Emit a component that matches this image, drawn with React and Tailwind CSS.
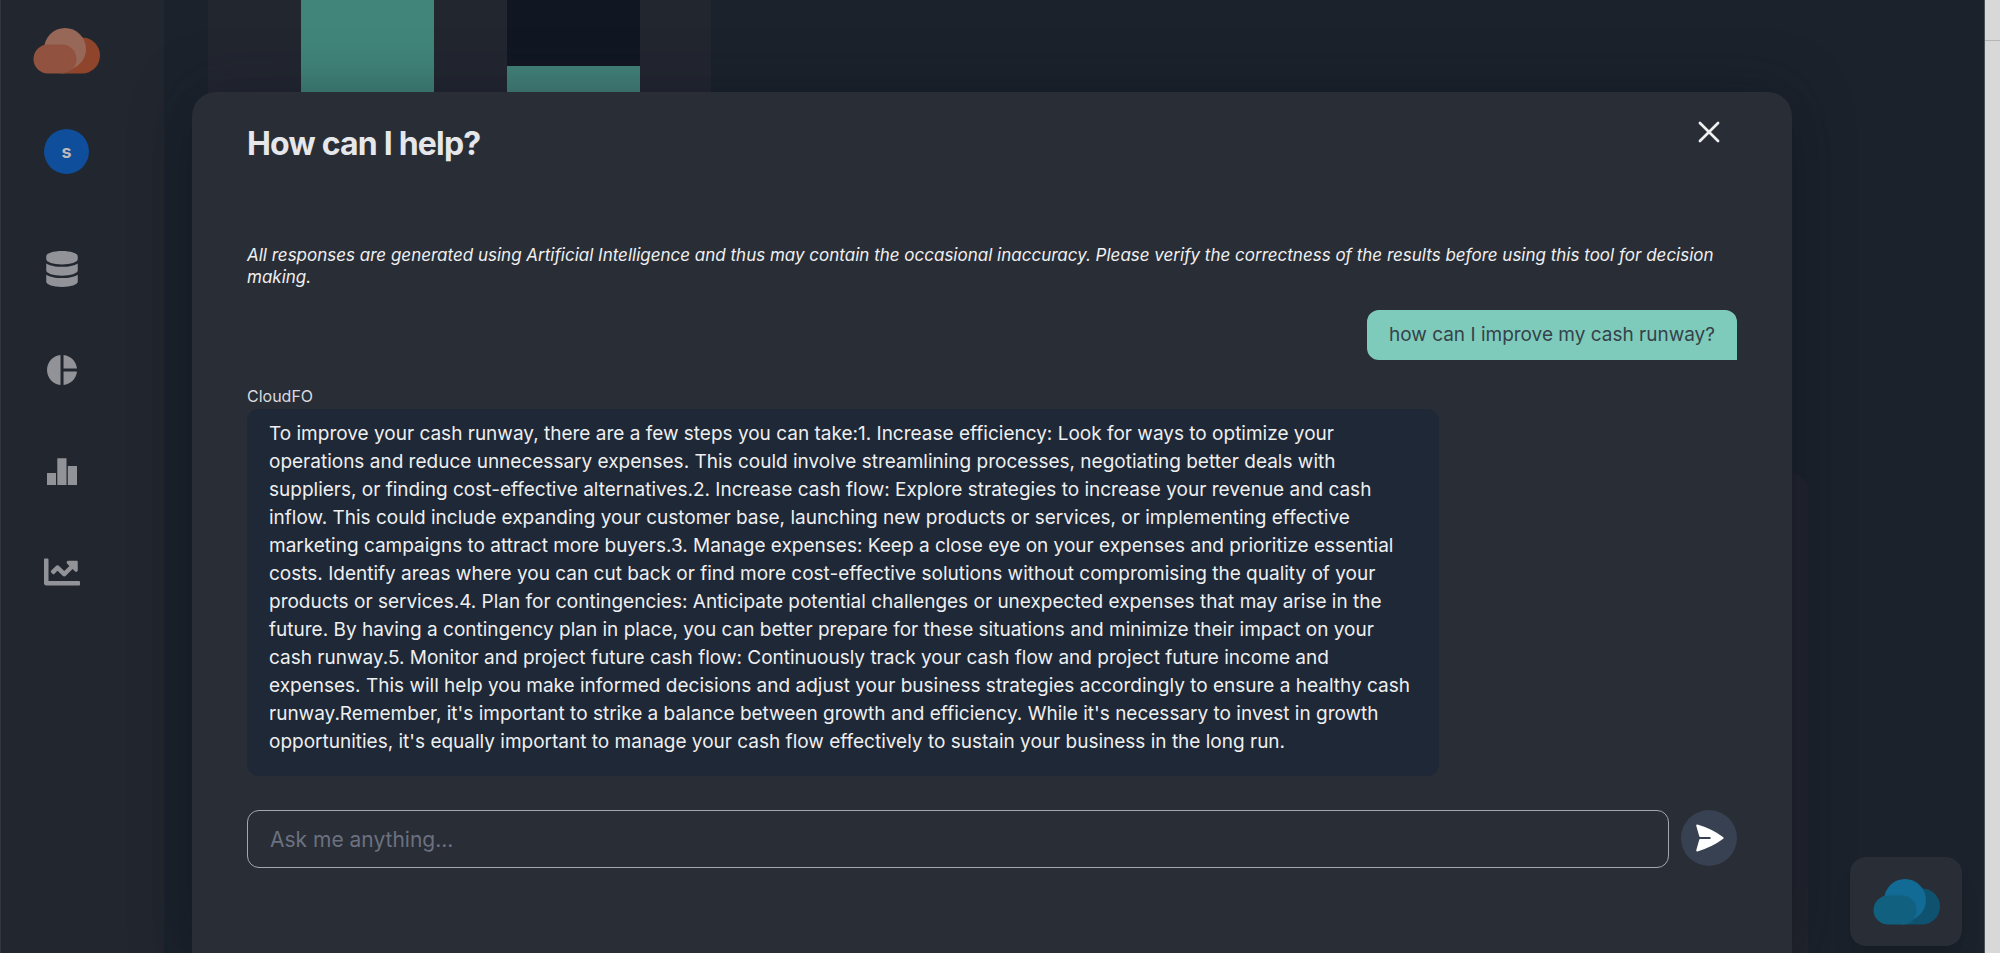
import { FaDatabase, FaChartLine } from "react-icons/fa";
import { MdPieChart } from "react-icons/md";

const ANSWER =
  "To improve your cash runway, there are a few steps you can take:1. Increase efficiency: Look for ways to optimize your operations and reduce unnecessary expenses. This could involve streamlining processes, negotiating better deals with suppliers, or finding cost-effective alternatives.2. Increase cash flow: Explore strategies to increase your revenue and cash inflow. This could include expanding your customer base, launching new products or services, or implementing effective marketing campaigns to attract more buyers.3. Manage expenses: Keep a close eye on your expenses and prioritize essential costs. Identify areas where you can cut back or find more cost-effective solutions without compromising the quality of your products or services.4. Plan for contingencies: Anticipate potential challenges or unexpected expenses that may arise in the future. By having a contingency plan in place, you can better prepare for these situations and minimize their impact on your cash runway.5. Monitor and project future cash flow: Continuously track your cash flow and project future income and expenses. This will help you make informed decisions and adjust your business strategies accordingly to ensure a healthy cash runway.Remember, it's important to strike a balance between growth and efficiency. While it's necessary to invest in growth opportunities, it's equally important to manage your cash flow effectively to sustain your business in the long run.";

function Cloud({ back, top, front, rim }) {
  return (
    <svg viewBox="0 0 67 46" className="h-[46px] w-[67px]" aria-hidden="true">
      <path d="M28 45.500h21a18 18 0 0 0 0-36h-6z" fill={back} />
      <circle cx="32" cy="21" r="21" fill={top} />
      <path d="M15 16.500h14a14.500 14.500 0 0 1 0 29H15a14.500 14.500 0 0 1 0-29z" fill={front} />
      <path d="M29 45c5 0 8-1 11-3" stroke={rim} fill="none" />
    </svg>
  );
}

function BarsIcon() {
  return (
    <svg viewBox="0 0 36 36" className="size-9" fill="currentColor" aria-hidden="true">
      <path d="M3 20h9v12H3zM13.300 5.300h9.200V32h-9.200zM23.800 13H33v19h-9.200z" />
    </svg>
  );
}

function SendIcon() {
  return (
    <svg
      viewBox="0 0 32 32"
      className="size-8"
      fill="currentColor"
      stroke="currentColor"
      strokeWidth="2"
      strokeLinejoin="round"
      aria-hidden="true"
    >
      <path d="M4.200 3.500C13.500 6.200 22 10.300 29.700 16C22 21.700 13.500 25.800 4.200 28.500L7.200 18H18.500V14H7.200Z" />
    </svg>
  );
}

function NavLink({ label, children }) {
  return (
    <a href="#" aria-label={label} className="flex h-9 w-9 items-center justify-center text-[#919398]">
      {children}
    </a>
  );
}

function Sidebar() {
  return (
    <aside className="flex w-[164px] shrink-0 flex-col border-l border-[#31363e] bg-[#22262e] pt-7">
      <a href="#" aria-label="Home" className="ml-8">
        <Cloud back="#8f452b" top="#976858" front="#925240" rim="#7f4a38" />
      </a>
      <button
        type="button"
        aria-label="Account"
        className="mt-[55px] ml-[43px] flex size-[45px] items-center justify-center rounded-full bg-[#0f4e9a] text-lg font-bold text-[#b9b9bb]"
      >
        s
      </button>
      <nav className="mt-[77px] ml-[43px] flex flex-col gap-[65px]">
        <NavLink label="Data"><FaDatabase className="size-9" /></NavLink>
        <NavLink label="Breakdown"><MdPieChart className="size-9" /></NavLink>
        <NavLink label="Statistics"><BarsIcon /></NavLink>
        <NavLink label="Trends"><FaChartLine className="size-9" /></NavLink>
      </nav>
    </aside>
  );
}

function Dashboard() {
  return (
    <main className="flex min-w-0 flex-1 flex-col bg-[#1b222b] pr-44 pl-11">
      <section className="flex h-[400px] w-[503px] gap-[73px] bg-[#22262f] px-[93px]">
        <div className="h-full w-[133px] shrink-0 bg-[#41857a]" />
        <div className="flex h-full w-[133px] shrink-0 flex-col bg-[#111722]">
          <div className="mt-[66px] flex-1 bg-[#43837a]" />
        </div>
      </section>
      <section className="mt-[74px] flex-1 rounded-t-2xl bg-[#21252d]" />
    </main>
  );
}

function ChatDialog() {
  return (
    <div
      role="dialog"
      aria-labelledby="dialog-title"
      className="flex w-full flex-col rounded-t-3xl bg-[#292d35] px-[55px] shadow-[0_25px_50px_-12px_rgba(0,0,0,0.25),0_0_60px_rgba(20,22,40,0.35)]"
    >
      <header className="flex items-start justify-between">
        <h1 id="dialog-title" className="mt-7 text-[32px] leading-12 font-bold tracking-tight text-[#e6e7eb]">
          How can I help?
        </h1>
        <button type="button" aria-label="Close" className="mt-6 mr-3 text-[#f0f0f1]">
          <svg viewBox="0 0 24 24" className="size-8" fill="none" stroke="currentColor" strokeWidth="2" strokeLinecap="round">
            <path d="M5.200 5.200l13.600 13.600M18.800 5.200L5.200 18.800" />
          </svg>
        </button>
      </header>
      <p className="mt-[76px] text-[17px] leading-[22px] text-[#f0f0f2] italic">
        All responses are generated using Artificial Intelligence and thus may contain the occasional inaccuracy. Please
        verify the correctness of the results before using this tool for decision making.
      </p>
      <p className="mt-[22px] self-end rounded-t-xl rounded-bl-xl bg-[#7ecbbb] px-[22px] py-[11px] text-[19px] leading-7 text-[#35424a]">
        how can I improve my cash runway?
      </p>
      <p className="mt-[26px] text-base leading-5 text-[#d9dbe0]">CloudFO</p>
      <p className="mt-[3px] w-4/5 rounded-xl bg-[#1f2836] px-[22px] pt-[11px] pb-5 text-[19px] leading-7 text-[#eeeff1]">
        {ANSWER}
      </p>
      <form className="mt-[34px] mb-[85px] flex items-start gap-3" onSubmit={(e) => e.preventDefault()}>
        <input
          type="text"
          aria-label="Question"
          placeholder="Ask me anything..."
          className="h-[58px] min-w-0 flex-1 rounded-xl border border-[#a3a7b3] bg-transparent px-[22px] text-[21px] text-[#eeeff1] placeholder:text-[#6b7180]"
        />
        <button
          type="submit"
          aria-label="Send"
          className="flex size-14 items-center justify-center rounded-full bg-[#374151] text-white"
        >
          <SendIcon />
        </button>
      </form>
    </div>
  );
}

export default function App() {
  return (
    <div className="flex h-screen overflow-hidden bg-[#d8d8d8] font-['Inter',sans-serif]">
      <div className="relative flex min-w-0 flex-1 overflow-hidden border-r border-[#4b505a]">
        <Sidebar />
        <Dashboard />
        <div className="absolute inset-x-48 top-[92px] bottom-0 flex">
          <ChatDialog />
        </div>
        <button
          type="button"
          aria-label="Open assistant"
          className="absolute right-[22px] bottom-[7px] flex h-[89px] w-28 items-center justify-center rounded-2xl bg-[#292d35] shadow-xl"
        >
          <Cloud back="#0f526f" top="#126b94" front="#11607f" rim="#11607f" />
        </button>
      </div>
      <div className="w-[15px] shrink-0 pt-10">
        <div className="h-px bg-[#b5b5b5]" />
      </div>
    </div>
  );
}
